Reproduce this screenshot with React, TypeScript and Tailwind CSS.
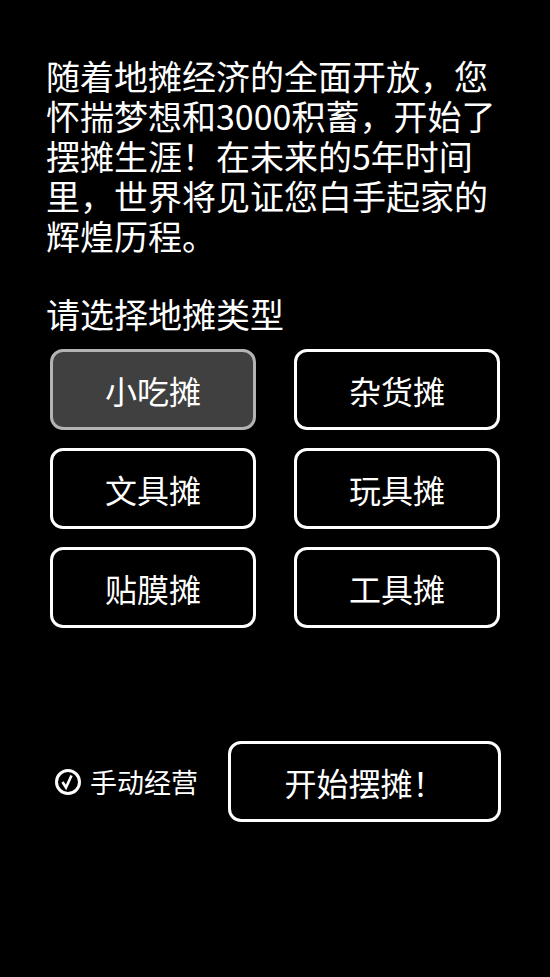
import { useState } from "react";

const stalls = ["小吃摊", "杂货摊", "文具摊", "玩具摊", "贴膜摊", "工具摊"];

export default function App() {
  const [selected, setSelected] = useState("小吃摊");
  const [manual, setManual] = useState(true);

  return (
    <div
      className="w-[550px] h-[977px] bg-black text-white flex flex-col px-[46px]"
      style={{ fontFamily: '"Noto Sans CJK SC", "Noto Sans", sans-serif' }}
    >
      {/* intro */}
      <p className="mt-[56px] text-[34px] leading-[40px] whitespace-nowrap">
        随着地摊经济的全面开放，您
        <br />
        怀揣梦想和3000积蓄，开始了
        <br />
        摆摊生涯！在未来的5年时间
        <br />
        里，世界将见证您白手起家的
        <br />
        辉煌历程。
      </p>

      <div className="mt-[38px] text-[34px] leading-[40px]">请选择地摊类型</div>

      {/* stall types */}
      <div className="mt-[15px] grid grid-cols-2 gap-x-[38px] gap-y-[18px] px-[4px]">
        {stalls.map((s) => (
          <button
            key={s}
            onClick={() => setSelected(s)}
            className={
              selected === s
                ? "h-[81px] rounded-[13px] border-[3px] border-[#b3b3b3] bg-[#404040] text-[32px] leading-[40px] text-white"
                : "h-[81px] rounded-[13px] border-[3px] border-white bg-black text-[32px] leading-[40px] text-white"
            }
          >
            {s}
          </button>
        ))}
      </div>

      {/* bottom */}
      <div className="mt-[113px] flex items-center">
        <button
          onClick={() => setManual(!manual)}
          className="flex items-center ml-[8px] w-[174px]"
        >
          <svg width="28" height="28" viewBox="0 0 28 28">
            <circle cx="14" cy="14" r="11.5" fill="none" stroke="white" strokeWidth="3" />
            {manual && (
              <path d="M8.5 14 L12 19.5 L17.5 7.5" fill="none" stroke="white" strokeWidth="2.6" strokeLinejoin="miter" />
            )}
          </svg>
          <span className="ml-[8px] text-[27px] leading-[32px]">手动经营</span>
        </button>
        <button className="w-[273px] h-[81px] rounded-[13px] border-[3px] border-white text-[32px] leading-[40px]">
          开始摆摊！
        </button>
      </div>
    </div>
  );
}
